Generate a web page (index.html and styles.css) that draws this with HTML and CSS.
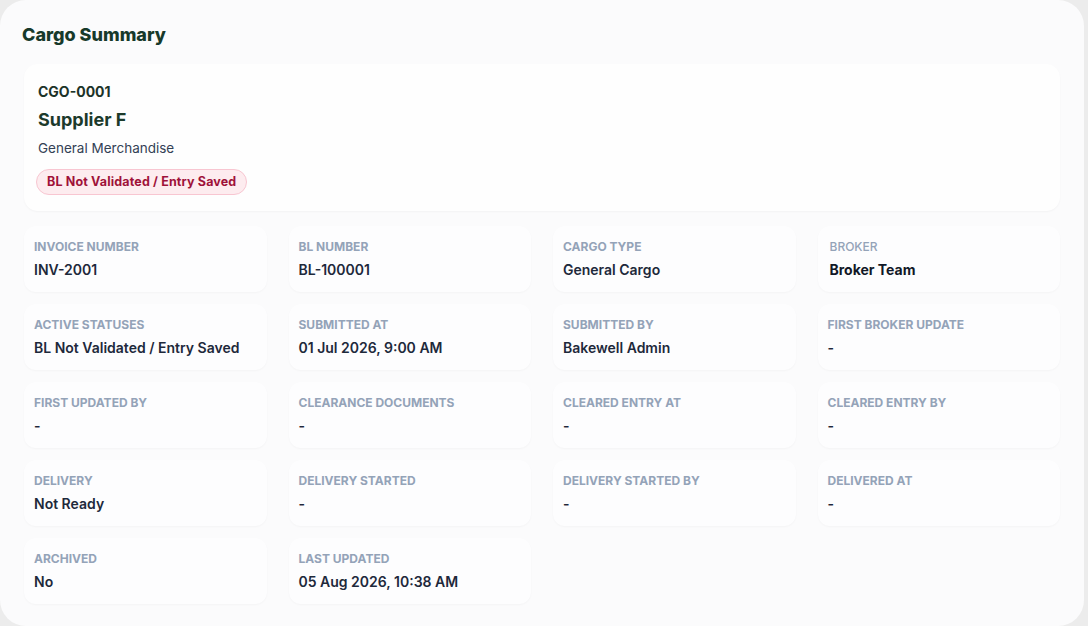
FILE: index.html
```html
<!DOCTYPE html>
<html lang="en">
<head>
    <meta charset="UTF-8">
    <meta name="viewport" content="width=device-width, initial-scale=1.0">
    <title>Cargo Summary</title>
    <link rel="stylesheet" href="styles.css">
</head>
<body>
    <div class="panel">
        <h2 class="panel-title">Cargo Summary</h2>

        <div class="head-card">
            <div class="cargo-ref">CGO-0001</div>
            <div class="cargo-supplier">Supplier F</div>
            <div class="cargo-desc">General Merchandise</div>
            <span class="badge">BL Not Validated / Entry Saved</span>
        </div>

        <div class="details">
            <div class="item"><div class="label">Invoice Number</div><div class="value">INV-2001</div></div>
            <div class="item"><div class="label">BL Number</div><div class="value">BL-100001</div></div>
            <div class="item"><div class="label">Cargo Type</div><div class="value">General Cargo</div></div>
            <div class="item item-broker"><div class="label">Broker</div><div class="value">Broker Team</div></div>

            <div class="item"><div class="label">Active Statuses</div><div class="value">BL Not Validated / Entry Saved</div></div>
            <div class="item"><div class="label">Submitted At</div><div class="value">01 Jul 2026, 9:00 AM</div></div>
            <div class="item"><div class="label">Submitted By</div><div class="value">Bakewell Admin</div></div>
            <div class="item"><div class="label">First Broker Update</div><div class="value">-</div></div>

            <div class="item"><div class="label">First Updated By</div><div class="value">-</div></div>
            <div class="item"><div class="label">Clearance Documents</div><div class="value">-</div></div>
            <div class="item"><div class="label">Cleared Entry At</div><div class="value">-</div></div>
            <div class="item"><div class="label">Cleared Entry By</div><div class="value">-</div></div>

            <div class="item"><div class="label">Delivery</div><div class="value">Not Ready</div></div>
            <div class="item"><div class="label">Delivery Started</div><div class="value">-</div></div>
            <div class="item"><div class="label">Delivery Started By</div><div class="value">-</div></div>
            <div class="item"><div class="label">Delivered At</div><div class="value">-</div></div>

            <div class="item"><div class="label">Archived</div><div class="value">No</div></div>
            <div class="item"><div class="label">Last Updated</div><div class="value">05 Aug 2026, 10:38 AM</div></div>
        </div>
    </div>
</body>
</html>
```

FILE: styles.css
```css
body {
    margin: 0;
    background: #ececec;
    font-family: Inter, "Noto Sans", sans-serif;
    color: #111827;
}

.panel {
    height: 626px;
    box-sizing: border-box;
    margin-right: 4px;
    background: #fbfbfc;
    border-radius: 26px;
    padding: 24px 24px 0 24px;
}

.panel-title {
    margin: 0 0 0 -2px;
    font-size: 18px;
    line-height: 22px;
    font-weight: 800;
    color: #17392a;
}

.head-card {
    margin-top: 18px;
    background: #fefefe;
    border-radius: 14px;
    padding: 19px 14px 16px;
    box-shadow: 0 1px 2px rgba(15, 23, 42, 0.035);
}

.cargo-ref {
    font-size: 14px;
    line-height: 18px;
    font-weight: 700;
    color: #1c3328;
}

.cargo-supplier {
    margin-top: 7px;
    font-size: 18px;
    line-height: 24px;
    font-weight: 700;
    color: #1c3a2b;
}

.cargo-desc {
    margin-top: 7px;
    font-size: 13.5px;
    line-height: 18px;
    color: #334155;
}

.badge {
    display: inline-block;
    margin-top: 12px;
    margin-left: -2px;
    padding: 4px 10px;
    line-height: 16px;
    font-size: 12.5px;
    letter-spacing: 0.15px;
    font-weight: 700;
    color: #9f1239;
    background: #fdecef;
    border: 1px solid #f8c6d1;
    border-radius: 999px;
}

.details {
    display: grid;
    grid-template-columns: repeat(4, 1fr);
    column-gap: 22px;
    row-gap: 12px;
    margin-top: 15px;
}

.item {
    background: #fdfdfe;
    border-radius: 12px;
    padding: 13px 10px 12px;
    box-shadow: 0 1px 2px rgba(15, 23, 42, 0.03);
}

.label {
    font-size: 12px;
    line-height: 16px;
    font-weight: 700;
    color: #94a3b8;
    text-transform: uppercase;
}

.value {
    margin-top: 5px;
    font-size: 14px;
    line-height: 20px;
    font-weight: 600;
    color: #1e293b;
}

.item-broker .label {
    font-weight: 500;
    margin-left: 2px;
}

.item-broker .value {
    font-weight: 700;
    color: #111827;
    margin-left: 2px;
}
```
